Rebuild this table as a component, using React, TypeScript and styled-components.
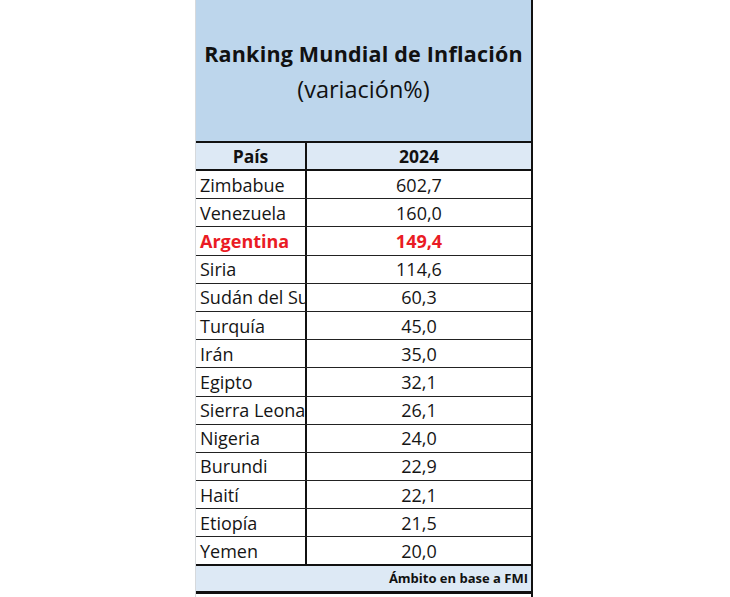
import React from "react";
import styled, { createGlobalStyle } from "styled-components";

const Global = createGlobalStyle`
  html, body { margin: 0; padding: 0; background: #ffffff; }
  body { font-family: "Open Sans", "Liberation Sans", sans-serif; }
`;

const Page = styled.div`
  width: 730px;
  height: 597px;
  display: flex;
  justify-content: flex-start;
  padding-left: 195px;
  box-sizing: border-box;
  overflow: hidden;
`;

const Sheet = styled.div`
  width: 338px;
  display: flex;
  flex-direction: column;
  border-left: 1px solid #d6d9dc;
  border-right: 2px solid #111;
  box-sizing: border-box;
`;

const TitleBlock = styled.div`
  height: 141px;
  background: #bdd6ec;
  display: flex;
  flex-direction: column;
  align-items: center;
  padding-top: 38px;
  box-sizing: border-box;
  color: #111;
`;

const Title = styled.div`
  font-weight: 700;
  font-size: 21.5px;
  line-height: 32px;
  letter-spacing: 0.2px;
  white-space: nowrap;
`;

const Subtitle = styled.div`
  font-size: 23.5px;
  line-height: 32px;
  margin-top: 3px;
`;

const Grid = styled.div`
  display: grid;
  grid-template-columns: 111px 1fr;
`;

const HeaderRow = styled(Grid)`
  height: 30px;
  border-top: 2px solid #111;
  border-bottom: 2px solid #111;
  background: #dde9f5;
  box-sizing: border-box;
  font-weight: 700;
  font-size: 17.5px;
  color: #111;
`;

const Row = styled(Grid)<{ $last?: boolean; $hl?: boolean }>`
  height: ${(p) => (p.$last ? "26.3px" : "28.2px")};
  border-bottom: ${(p) => (p.$last ? "0" : "1.5px solid #222")};
  box-sizing: border-box;
  font-size: 18px;
  color: ${(p) => (p.$hl ? "#ea1b24" : "#151515")};
  font-weight: ${(p) => (p.$hl ? 700 : 400)};
`;

const Cell = styled.div<{ $center?: boolean; $divider?: boolean }>`
  display: flex;
  align-items: center;
  justify-content: ${(p) => (p.$center ? "center" : "flex-start")};
  padding-left: ${(p) => (p.$center ? "0" : "4px")};
  border-right: ${(p) => (p.$divider ? "2px solid #111" : "0")};
  white-space: nowrap;
  overflow: hidden;
`;

const Footer = styled.div`
  height: 30px;
  border-top: 2px solid #111;
  border-bottom: 3px solid #111;
  background: #dde9f5;
  box-sizing: border-box;
  display: flex;
  align-items: center;
  justify-content: flex-end;
  padding-right: 3px;
  font-weight: 700;
  font-size: 13px;
  color: #111;
`;

const data: [string, string][] = [
  ["Zimbabue", "602,7"],
  ["Venezuela", "160,0"],
  ["Argentina", "149,4"],
  ["Siria", "114,6"],
  ["Sudán del Sur", "60,3"],
  ["Turquía", "45,0"],
  ["Irán", "35,0"],
  ["Egipto", "32,1"],
  ["Sierra Leona", "26,1"],
  ["Nigeria", "24,0"],
  ["Burundi", "22,9"],
  ["Haití", "22,1"],
  ["Etiopía", "21,5"],
  ["Yemen", "20,0"],
];

export default function App() {
  return (
    <>
      <Global />
      <Page>
        <Sheet>
          <TitleBlock>
            <Title>Ranking Mundial de Inflación</Title>
            <Subtitle>(variación%)</Subtitle>
          </TitleBlock>
          <HeaderRow>
            <Cell $center $divider>País</Cell>
            <Cell $center>2024</Cell>
          </HeaderRow>
          {data.map(([c, v], i) => (
            <Row key={c} $hl={c === "Argentina"} $last={i === data.length - 1}>
              <Cell $divider>{c}</Cell>
              <Cell $center>{v}</Cell>
            </Row>
          ))}
          <Footer>Ámbito en base a FMI</Footer>
        </Sheet>
      </Page>
    </>
  );
}
